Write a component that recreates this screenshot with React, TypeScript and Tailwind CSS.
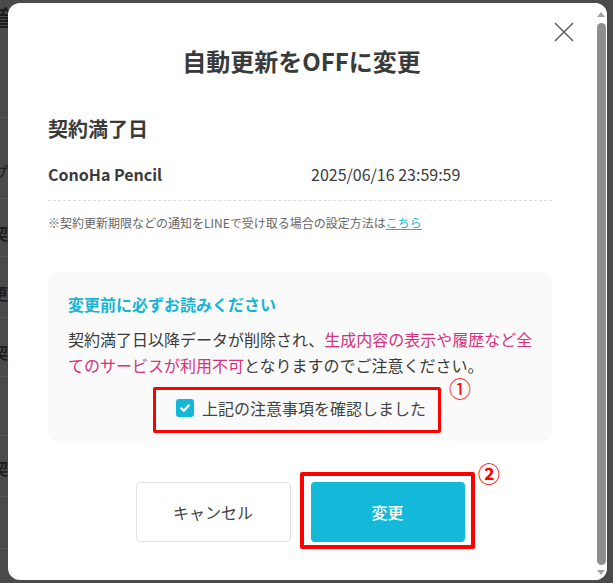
import React from "react";

const font = { fontFamily: '"Noto Sans CJK JP", "Noto Sans", sans-serif' };

function BgRows() {
  const rows: { h: number; items: { t: string; pt: number; cls: string }[] }[] = [
    {
      h: 118,
      items: [
        { t: "管", pt: 4, cls: "text-[22px] leading-[24px] font-bold" },
        { t: "a", pt: 28, cls: "text-[16px] leading-[16px]" },
      ],
    },
    { h: 81, items: [{ t: "プ", pt: 44, cls: "text-[16px] leading-[20px]" }] },
    { h: 58, items: [{ t: "契約", pt: 24, cls: "text-[16px] leading-[20px] font-bold" }] },
    { h: 61, items: [{ t: "更", pt: 26, cls: "text-[16px] leading-[20px] font-bold" }] },
    { h: 59, items: [{ t: "契約", pt: 24, cls: "text-[16px] leading-[20px] font-bold" }] },
    { h: 59, items: [{ t: "l", pt: 25, cls: "text-[18px] leading-[20px] font-bold" }] },
    { h: 61, items: [{ t: "契約", pt: 22, cls: "text-[16px] leading-[20px] font-bold" }] },
    { h: 52, items: [] },
  ];
  return (
    <div className="flex flex-col -ml-[8px] w-[16px]">
      {rows.map((r, i) => (
        <div
          key={i}
          className="flex flex-col border-b border-[#585858] text-[#1c1c1c] overflow-hidden whitespace-nowrap"
          style={{ height: r.h }}
        >
          {r.items.map((it, j) => (
            <div key={j} className={it.cls} style={{ paddingTop: it.pt }}>
              {it.t}
            </div>
          ))}
        </div>
      ))}
    </div>
  );
}

export default function App() {
  return (
    <div className="relative w-[613px] h-[583px] overflow-hidden bg-[#4a4a4a]" style={font}>
      <BgRows />
      <div className="absolute left-[8px] top-[3px] w-[599px] h-[577px] bg-white rounded-[12px] flex overflow-hidden">
        <div className="relative flex-1 flex flex-col">
          <button className="absolute right-[21px] top-[19px] w-[20px] h-[20px]">
            <svg viewBox="0 0 20 20" width="20" height="20" fill="none" stroke="#555" strokeWidth="1.4">
              <path d="M1 1 L19 19 M19 1 L1 19" />
            </svg>
          </button>
          <h1 className="mt-[42px] text-center text-[24px] font-bold text-[#3a3a3a] leading-[32px]">
            自動更新をOFFに変更
          </h1>
          <div className="ml-[40px] mr-[43px] mt-[37px]">
            <h2 className="text-[20px] font-bold text-[#3a3a3a] leading-[30px]">契約満了日</h2>
            <div className="flex items-center mt-[15px] h-[30px] text-[16px] text-[#3a3a3a]">
              <div className="w-[263px] font-bold">ConoHa Pencil</div>
              <div>2025/06/16 23:59:59</div>
            </div>
            <div className="mt-[11px] border-t border-dashed border-[#dddddd]" />
            <p className="mt-[12px] text-[12px] leading-[20px] text-[#666666]">
              ※契約更新期限などの通知をLINEで受け取る場合の設定方法は
              <span className="text-[#16b6d8] underline">こちら</span>
            </p>
            <div className="mt-[39px] bg-[#fafafa] rounded-[8px] pl-[20px] pr-[18px] pt-[20px] pb-[21px]">
              <h3 className="text-[16px] font-bold text-[#17b4d4] leading-[24px]">変更前に必ずお読みください</h3>
              <p className="mt-[10px] text-[16px] leading-[26px] text-[#3a3a3a]">
                契約満了日以降データが削除され、
                <span className="text-[#d8307a]">生成内容の表示や履歴など全てのサービスが利用不可</span>
                となりますのでご注意ください。
              </p>
              <label className="mt-[18px] flex items-center justify-center gap-[8px] h-[24px]">
                <span className="w-[18px] h-[18px] rounded-[3px] bg-[#16b6d8] flex items-center justify-center">
                  <svg viewBox="0 0 12 12" width="12" height="12" fill="none" stroke="#fff" strokeWidth="2.2" strokeLinecap="round" strokeLinejoin="round">
                    <path d="M2.2 6.3 L4.8 8.8 L9.8 3.4" />
                  </svg>
                </span>
                <span className="text-[16px] text-[#444444]">上記の注意事項を確認しました</span>
              </label>
            </div>
            <div className="mt-[41px] flex justify-center gap-[20px]">
              <button className="w-[155px] h-[60px] rounded-[4px] border border-[#e2e2e2] bg-white text-[16px] text-[#444444]">
                キャンセル
              </button>
              <button className="w-[154px] h-[60px] rounded-[4px] bg-[#14b8d8] text-[16px] font-medium text-white">
                変更
              </button>
            </div>
          </div>
        </div>
        <div className="w-[12px] flex flex-col items-center pt-[9px] pb-[5px] bg-white">
          <svg width="8" height="5" viewBox="0 0 8 5"><path d="M0 5 L4 0 L8 5 Z" fill="#a3a3a3" /></svg>
          <div className="mt-[6px] w-[9px] flex-1 rounded-full bg-[#8e8e8e]" />
          <svg className="mt-[5px]" width="8" height="5" viewBox="0 0 8 5"><path d="M0 0 L8 0 L4 5 Z" fill="#a3a3a3" /></svg>
        </div>
        <div className="absolute left-[145px] top-[384px] w-[288px] h-[46px] border-[3px] border-[#ff0000] rounded-[2px]" />
        <div className="absolute left-[441px] top-[370px] text-[22px] leading-[28px] text-[#ff0000]">①</div>
        <div className="absolute left-[292px] top-[469px] w-[175px] h-[77px] border-[4px] border-[#ff0000] rounded-[2px]" />
        <div className="absolute left-[470px] top-[455px] text-[22px] leading-[28px] font-bold text-[#ff0000]">②</div>
      </div>
    </div>
  );
}
